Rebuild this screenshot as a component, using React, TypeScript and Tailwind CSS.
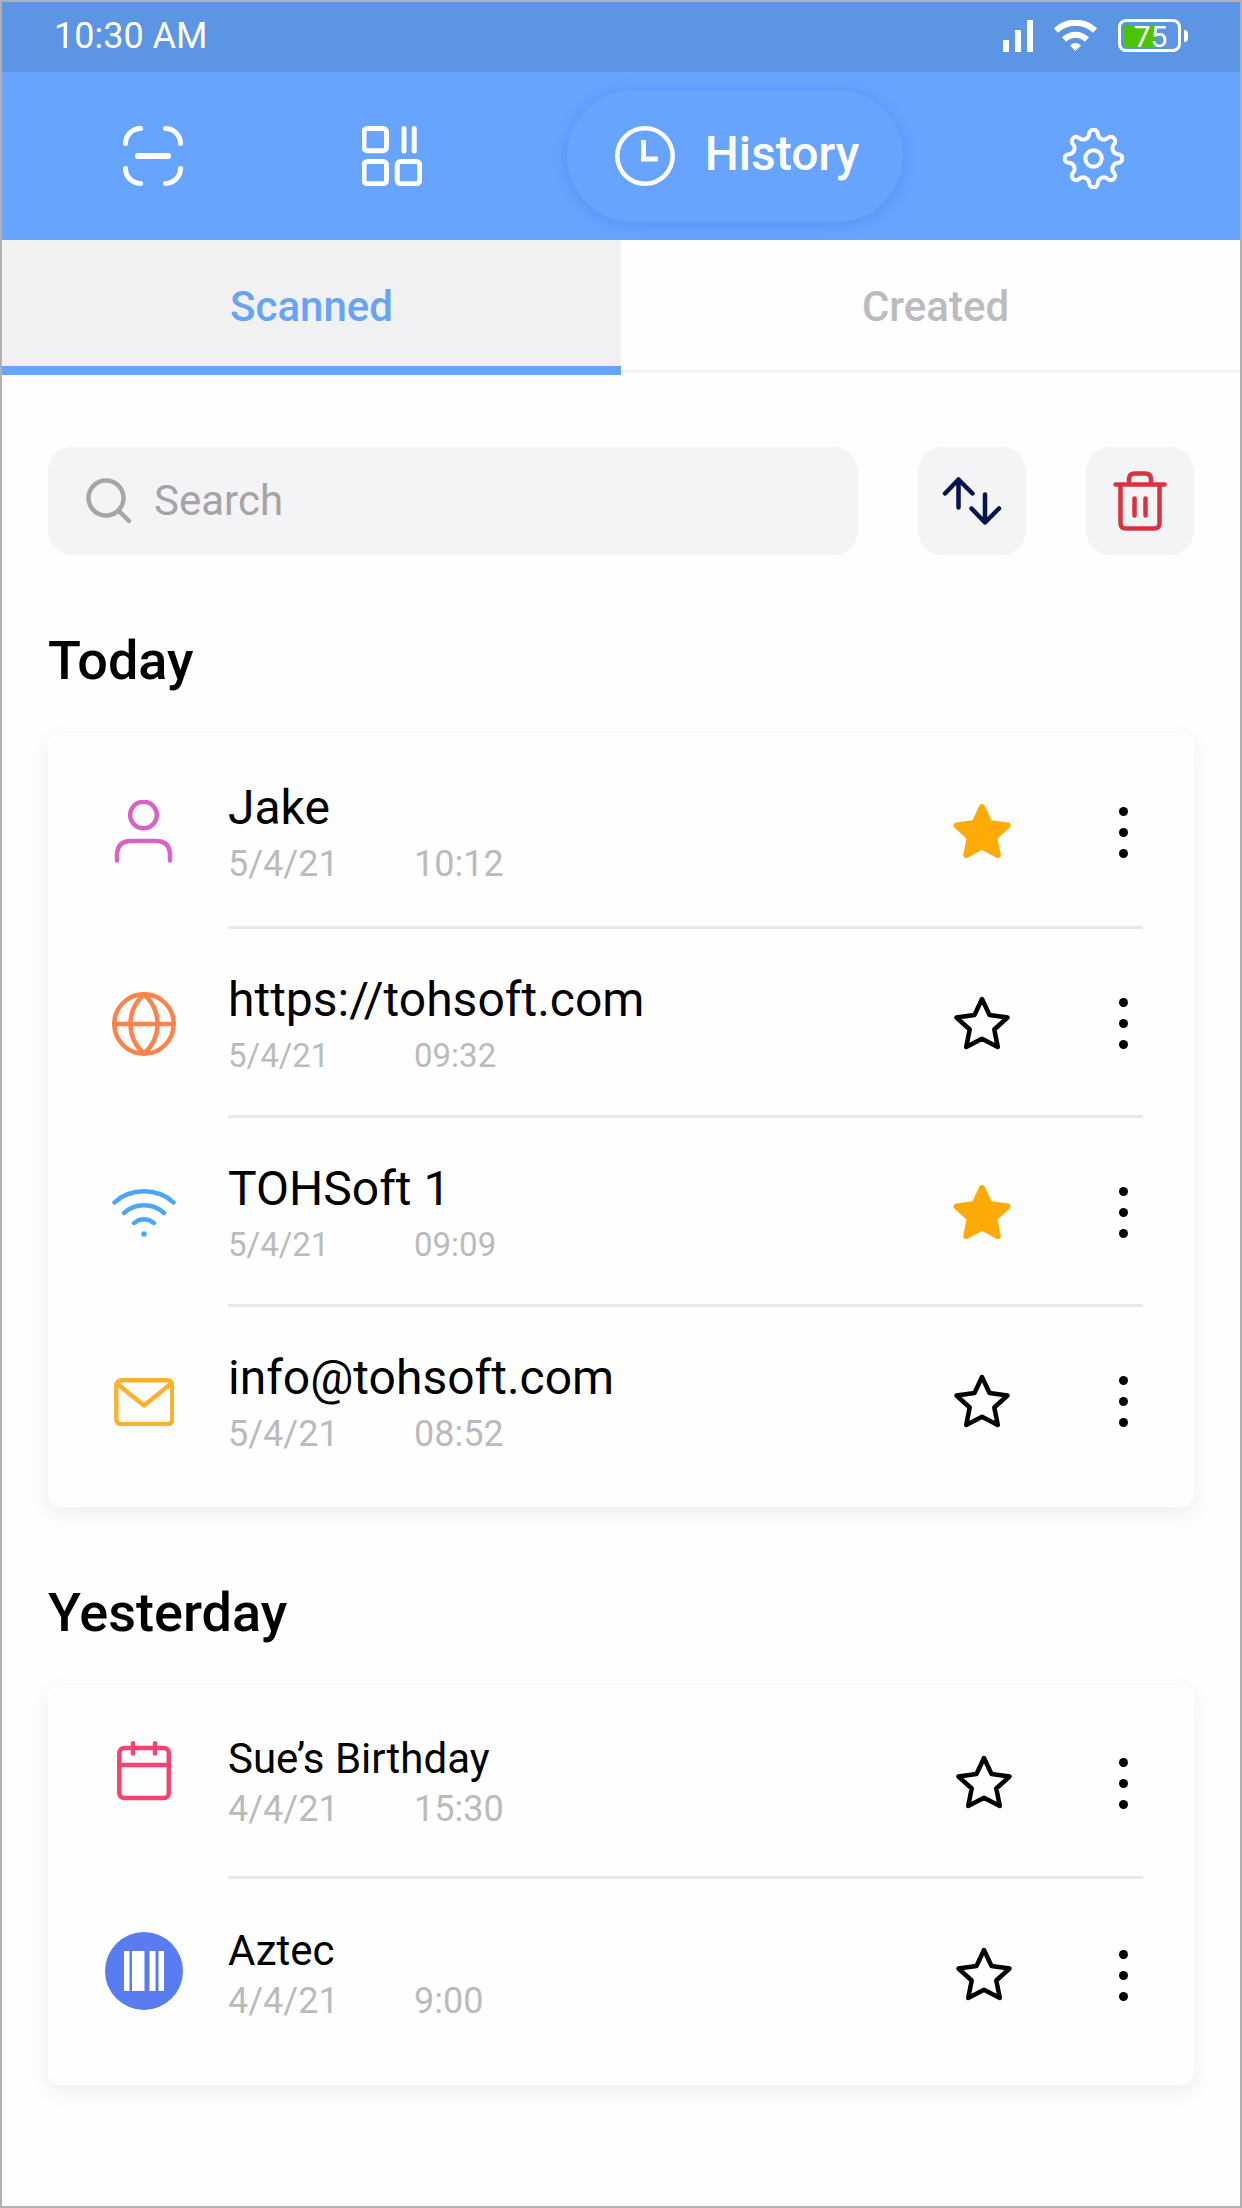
import type { ReactNode } from "react";

type Kind = "contact" | "url" | "wifi" | "email" | "event" | "aztec";

interface Entry {
  kind: Kind;
  title: string;
  date: string;
  time: string;
  starred?: boolean;
  smallMeta?: boolean;
}

const today: Entry[] = [
  { kind: "contact", title: "Jake", date: "5/4/21", time: "10:12", starred: true },
  { kind: "url", title: "https://tohsoft.com", date: "5/4/21", time: "09:32", smallMeta: true },
  { kind: "wifi", title: "TOHSoft 1", date: "5/4/21", time: "09:09", starred: true, smallMeta: true },
  { kind: "email", title: "info@tohsoft.com", date: "5/4/21", time: "08:52" },
];

const yesterday: Entry[] = [
  { kind: "event", title: "Sue’s Birthday", date: "4/4/21", time: "15:30" },
  { kind: "aztec", title: "Aztec", date: "4/4/21", time: "9:00" },
];

const line = { fill: "none", strokeLinecap: "round", strokeLinejoin: "round" } as const;

function ScanIcon() {
  return (
    <svg viewBox="0 0 60 60" className="size-[60px]" stroke="white" strokeWidth="5" {...line}>
      <path d="M2.5 17.5A15 15 0 0 1 17.5 2.5M42.5 2.5A15 15 0 0 1 57.5 17.5M57.5 42.5A15 15 0 0 1 42.5 57.5M17.5 57.5A15 15 0 0 1 2.5 42.5" />
      <path d="M15 30H45" strokeWidth="6" />
    </svg>
  );
}

function CreateIcon() {
  return (
    <svg viewBox="0 0 60 60" className="size-[60px]" stroke="white" strokeWidth="5" {...line}>
      <rect x="2" y="2.5" width="22.5" height="22.2" rx="3.5" />
      <rect x="2" y="35.5" width="22.5" height="22.2" rx="3.5" />
      <rect x="35.2" y="35.5" width="22.5" height="22.2" rx="3.5" />
      <path d="M42 2.5V25M52.2 2.5V25" />
    </svg>
  );
}

function ClockIcon() {
  return (
    <svg viewBox="0 0 60 60" className="size-[60px]" fill="none" stroke="white" strokeWidth="4.5">
      <circle cx="30" cy="30" r="27.7" />
      <path d="M28.5 14V33H43" strokeWidth="5" />
    </svg>
  );
}

// Outline of an eight-toothed gear: round heads joined by round valleys.
function gearPath() {
  const point = (degrees: number) => {
    const a = (degrees * Math.PI) / 180;
    return `${(30.5 + 24.9 * Math.cos(a)).toFixed(2)} ${(30.5 + 24.9 * Math.sin(a)).toFixed(2)}`;
  };
  let d = `M${point(-10)}`;
  for (let tooth = 0; tooth < 8; tooth++) {
    const centre = tooth * 45;
    d += `A4.32 4.32 0 0 1 ${point(centre + 10)}A6 6 0 0 0 ${point(centre + 35)}`;
  }
  return d + "Z";
}

function GearIcon() {
  return (
    <svg viewBox="0 0 61 61" className="size-[61px]" stroke="white" strokeWidth="4" {...line}>
      <path d={gearPath()} />
      <circle cx="30.5" cy="30.5" r="8.2" />
    </svg>
  );
}

function SignalIcon() {
  return (
    <svg viewBox="0 0 30 32" className="h-8 w-[30px]" fill="white">
      <path d="M0 20H6V32H0ZM12 10H18V32H12ZM24 0H30V32H24Z" />
    </svg>
  );
}

function StatusWifiIcon() {
  return (
    <svg viewBox="0 0 43 31" className="h-[31px] w-[43px]" fill="none" stroke="white" strokeWidth="6">
      <path d="M2 10.5C13 0 30 0 41 10.5M10 19.5C17 13 26 13 33 19.5" />
      <path d="M21.5 31L16 25.5Q21.5 20 27 25.5Z" fill="white" stroke="none" />
    </svg>
  );
}

function Battery() {
  return (
    <div className="flex items-center gap-[3px]" role="img" aria-label="Battery 75 percent">
      <div className="grid h-[33px] w-[63px] items-center rounded-lg border-3 border-white p-[3px]">
        <div className="col-start-1 row-start-1 h-[22px] w-8 rounded-xs bg-[#4bc400]" />
        <span className="col-start-1 row-start-1 pl-0.5 text-center text-[30px] leading-[21px] text-white">75</span>
      </div>
      <div className="h-3 w-1 rounded-r-full bg-white" />
    </div>
  );
}

function SearchIcon() {
  return (
    <svg viewBox="0 0 46 46" className="size-[46px] shrink-0" stroke="#a6a6a6" strokeWidth="4.5" {...line}>
      <circle cx="20" cy="20" r="17.5" />
      <path d="M32.5 32.5L43 43" />
    </svg>
  );
}

function SortIcon() {
  return (
    <svg viewBox="0 0 60 50" className="h-[50px] w-[60px]" stroke="#06144f" strokeWidth="4.5" {...line}>
      <path d="M16.5 31.5V3.5M3 17.5L16.5 3.5L30.5 17.5M43 18.5V46.5M29.5 32.5L43 46.5L57 32.5" />
    </svg>
  );
}

function TrashIcon() {
  return (
    <svg viewBox="0 0 54 60" className="h-[60px] w-[54px]" stroke="#db3240" strokeWidth="4.5" {...line}>
      <path d="M2.5 13.5H51.5M7.5 13.5V52Q7.5 57.5 13 57.5H41Q46.5 57.5 46.5 52V13.5M16 13V8.5Q16 2.5 22 2.5H32Q38 2.5 38 8.5V13" />
      <path d="M21.5 27.5V44.5M32.5 27.5V44.5" />
    </svg>
  );
}

function StarIcon({ filled }: { filled?: boolean }) {
  return (
    <svg
      viewBox="0 0 64 64"
      className="size-16"
      fill={filled ? "#ffab07" : "none"}
      stroke={filled ? "#ffab07" : "black"}
      strokeWidth={filled ? 6 : 4.5}
      strokeLinejoin="round"
    >
      <path d="M31 7L38.5 23L56.5 25.5L43.3 37.5L46.8 55L31 46.7L15.2 55L18.7 37.5L5.5 25.5L23.5 23Z" />
    </svg>
  );
}

const kindIcons: Record<Kind, ReactNode> = {
  contact: (
    <svg viewBox="0 0 64 64" className="size-16" stroke="#d862c6" strokeWidth="4.5" {...line}>
      <circle cx="31.5" cy="15" r="13.3" />
      <path d="M5 60.5V55.5Q5 41 19 41H44Q58 41 58 55.5V60.5" />
    </svg>
  ),
  url: (
    <svg viewBox="0 0 64 64" className="size-16" stroke="#fb844d" strokeWidth="4.5" {...line}>
      <circle cx="32" cy="32" r="29.7" />
      <path d="M2 32H62M32 2.5C14 18 14 46 32 61.5C50 46 50 18 32 2.5Z" />
    </svg>
  ),
  wifi: (
    <svg viewBox="0 0 64 48" className="h-12 w-16" stroke="#4ba6fb" strokeWidth="4.5" {...line}>
      <path d="M2.5 13.5C18-1.5 46-1.5 61.5 13.5M12 24C23 13.5 41 13.5 52 24M22 34Q32 26.5 42 34" />
      <circle cx="32" cy="45" r="2.7" fill="#4ba6fb" stroke="none" />
    </svg>
  ),
  email: (
    <svg viewBox="0 0 60 48" className="h-12 w-[60px]" stroke="#fdb12f" strokeWidth="4.5" {...line}>
      <rect x="2.3" y="2.3" width="56" height="44" rx="5" />
      <path d="M4 6.5L30 27.5L56 6.5" />
    </svg>
  ),
  event: (
    <svg viewBox="0 0 54 84" className="h-[84px] w-[54px]" stroke="#f6436e" strokeWidth="4.5" {...line}>
      <rect x="2.3" y="7" width="49.5" height="50" rx="5" />
      <path d="M2.5 24H51.5M16 2.3V12.5M38 2.3V12.5" />
    </svg>
  ),
  aztec: (
    <svg viewBox="0 0 78 86" className="h-[86px] w-[78px]">
      <circle cx="39" cy="39" r="39" fill="#597cf1" />
      <path d="M19 19H24.5V59H19ZM27 19H39.5V59H27ZM44.5 19H50.5V59H44.5ZM53.5 19H59V59H53.5Z" fill="white" />
    </svg>
  ),
};

function EntryRow({ entry, compact }: { entry: Entry; compact?: boolean }) {
  return (
    <li className={compact ? "group flex h-48" : "group flex h-[189px] first:h-[194px]"}>
      <div className="flex w-[180px] items-center pl-14">
        <div className="flex w-20 justify-center">{kindIcons[entry.kind]}</div>
      </div>
      <div className="mr-[51px] flex flex-1 items-center border-b-3 border-[#e8e7ea] pt-[3px] group-last:border-transparent">
        <div className={compact ? "flex-1 pt-0.5" : "flex-1 pt-1"}>
          <h3 className={compact ? "text-[42px] leading-12 text-black" : "text-[48px] leading-14 text-black"}>
            {entry.title}
          </h3>
          <p
            className={
              "flex leading-12 text-[#bbbabd] " +
              (entry.smallMeta ? "text-[33px] " : "text-[36px] ") +
              (compact ? "mt-0.5" : "mt-1")
            }
          >
            <span className="w-[186px]">{entry.date}</span>
            <span>{entry.time}</span>
          </p>
        </div>
        <button
          type="button"
          aria-label={`Favourite ${entry.title}`}
          aria-pressed={!!entry.starred}
          className={compact ? "mr-[86px]" : "mr-[88px]"}
        >
          <StarIcon filled={entry.starred} />
        </button>
        <button type="button" aria-label={`More options for ${entry.title}`} className="flex w-10 flex-col items-center gap-3 py-2">
          <span className="size-[9px] rounded-full bg-black" />
          <span className="size-[9px] rounded-full bg-black" />
          <span className="size-[9px] rounded-full bg-black" />
        </button>
      </div>
    </li>
  );
}

function Section({ title, entries, compact }: { title: string; entries: Entry[]; compact?: boolean }) {
  return (
    <section className="mt-[74px]">
      <h2 className="text-[54px] leading-16 font-medium text-black">{title}</h2>
      <ul
        className={
          "mt-10 rounded-xl bg-[#fefefe] pt-0.5 shadow-[0_7px_20px_rgba(60,30,90,0.08)] " + (compact ? "pb-3.5" : "pb-[11px]")
        }
      >
        {entries.map((entry) => (
          <EntryRow key={entry.title} entry={entry} compact={compact} />
        ))}
      </ul>
    </section>
  );
}

export default function App() {
  return (
    <div className="min-h-screen border-2 border-[#b0b0b0] bg-[#fefefe] font-['Roboto',sans-serif]">
      <div className="flex h-[70px] items-center justify-between bg-[#5c95e4] pr-[52px] pb-[3px] pl-[52px] text-white">
        <span className="text-[36px] leading-[42px]">10:30 AM</span>
        <div className="flex items-center gap-[21px]">
          <SignalIcon />
          <StatusWifiIcon />
          <Battery />
        </div>
      </div>

      <nav className="grid h-[168px] grid-cols-[302fr_175fr_512fr_205fr] place-items-center bg-[#66a4ff] pr-11">
        <button type="button" aria-label="Scan">
          <ScanIcon />
        </button>
        <button type="button" aria-label="Create">
          <CreateIcon />
        </button>
        <button
          type="button"
          aria-current="page"
          className="flex h-[132px] items-center gap-[30px] rounded-full pr-11 pl-12 text-[48px] font-medium text-white shadow-[0_2px_14px_rgba(60,100,220,0.3)]"
        >
          <ClockIcon />
          <span className="pb-1">History</span>
        </button>
        <button type="button" aria-label="Settings" className="pt-1">
          <GearIcon />
        </button>
      </nav>

      <div role="tablist" className="grid h-[135px] grid-cols-2 text-[42px] font-medium">
        <button
          type="button"
          role="tab"
          aria-selected="true"
          className="border-b-9 border-[#66a4ff] bg-[#f1f1f3] pt-1.5 text-[#66a4f6]"
        >
          Scanned
        </button>
        <button
          type="button"
          role="tab"
          aria-selected="false"
          className="mb-0.5 border-b-3 border-[#f4f4f5] pt-0.5 pl-2.5 text-[#bcbcbe]"
        >
          Created
        </button>
      </div>

      <main className="px-[46px] pt-[72px] pb-12">
        <div className="flex gap-[60px]">
          <label className="flex h-[108px] flex-1 items-center gap-[22px] rounded-3xl bg-[#f4f3f6] px-[38px]">
            <SearchIcon />
            <input
              type="text"
              aria-label="Search"
              placeholder="Search"
              className="min-w-0 flex-1 bg-transparent pb-0.5 text-[42px] text-black outline-none placeholder:text-[#a4a3a6]"
            />
          </label>
          <button type="button" aria-label="Sort" className="flex size-[108px] items-center justify-center rounded-3xl bg-[#f4f3f5]">
            <SortIcon />
          </button>
          <button type="button" aria-label="Delete" className="flex size-[108px] items-center justify-center rounded-3xl bg-[#f4f3f5]">
            <TrashIcon />
          </button>
        </div>

        <Section title="Today" entries={today} />
        <Section title="Yesterday" entries={yesterday} compact />
      </main>
    </div>
  );
}
